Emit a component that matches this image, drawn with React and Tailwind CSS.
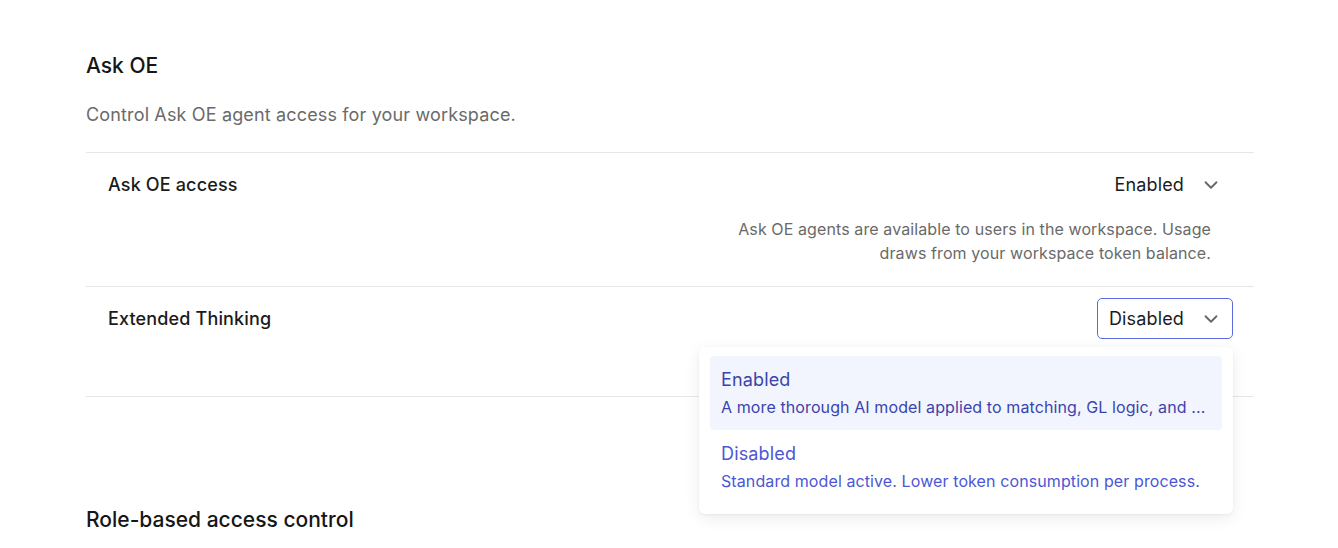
import React, { useState } from 'react';
import { ChevronDown } from 'lucide-react';

const options = [
  {
    value: 'enabled',
    label: 'Enabled',
    description: 'A more thorough AI model applied to matching, GL logic, and ...',
  },
  {
    value: 'disabled',
    label: 'Disabled',
    description: 'Standard model active. Lower token consumption per process.',
  },
];

function SelectButton({ label, active }) {
  return (
    <button
      className={
        'flex items-center gap-[16px] h-[41px] pl-[11px] pr-[10px] rounded-[5px] border text-[18px] tracking-[0.15px] text-[#1b1b1b] bg-white ' +
        (active ? 'border-[#5d6be0]' : 'border-transparent')
      }
    >
      <span>{label}</span>
      <ChevronDown size={22} strokeWidth={2} className="text-[#666]" />
    </button>
  );
}

export default function App() {
  const [hovered] = useState('enabled');

  return (
    <div className="min-h-screen bg-white font-['Inter',sans-serif] antialiased">
      <div className="pl-[86px] pr-[84px] pt-[52px]">
        <h2 className="text-[21px] leading-7 font-medium text-[#161616]">Ask OE</h2>
        <p className="mt-[23px] text-[18px] tracking-[0.15px] leading-6 text-[#6a6a6a]">
          Control Ask OE agent access for your workspace.
        </p>

        <div className="mt-[25px] border-t border-[#e6e6e6]">
          {/* Ask OE access */}
          <div className="px-[21px] pt-[11px] pb-[21px] border-b border-[#e6e6e6]">
            <div className="flex items-center justify-between">
              <span className="pl-px text-[18px] tracking-[0.15px] font-medium text-[#1b1b1b]">Ask OE access</span>
              <SelectButton label="Enabled" />
            </div>
            <p className="mt-[12px] ml-auto max-w-[500px] text-right text-[16px] tracking-[0.1px] leading-6 text-[#6a6a6a] pr-[22px]">
              Ask OE agents are available to users in the workspace. Usage draws from your workspace token balance.
            </p>
          </div>

          {/* Extended Thinking */}
          <div className="px-[21px] pt-[11px] pb-[57px] border-b border-[#e6e6e6]">
            <div className="flex items-center justify-between">
              <span className="pl-px text-[18px] tracking-[0.15px] font-medium text-[#1b1b1b]">Extended Thinking</span>
              <div className="relative">
                <SelectButton label="Disabled" active />
                <div className="absolute right-0 top-[49px] z-10 w-[534px] rounded-md bg-white px-[11px] pt-[9px] pb-[10px] shadow-[0_4px_16px_rgba(0,0,0,0.08),0_1px_3px_rgba(0,0,0,0.05)]">
                  {options.map((o) => (
                    <div
                      key={o.value}
                      className={
                        'rounded-[4px] px-[11px] pt-[12px] pb-[11px] ' +
                        (hovered === o.value ? 'bg-[#f2f5fd] text-[#3a44ae]' : 'text-[#4b57d6]')
                      }
                    >
                      <div className="text-[18px] tracking-[0.15px] leading-6">{o.label}</div>
                      <div className="mt-[3px] text-[16px] tracking-[0.1px] leading-6 whitespace-nowrap overflow-hidden">
                        {o.description}
                      </div>
                    </div>
                  ))}
                </div>
              </div>
            </div>
          </div>
        </div>

        <h2 className="mt-[109px] text-[21px] leading-7 font-medium text-[#161616]">Role-based access control</h2>
      </div>
    </div>
  );
}
